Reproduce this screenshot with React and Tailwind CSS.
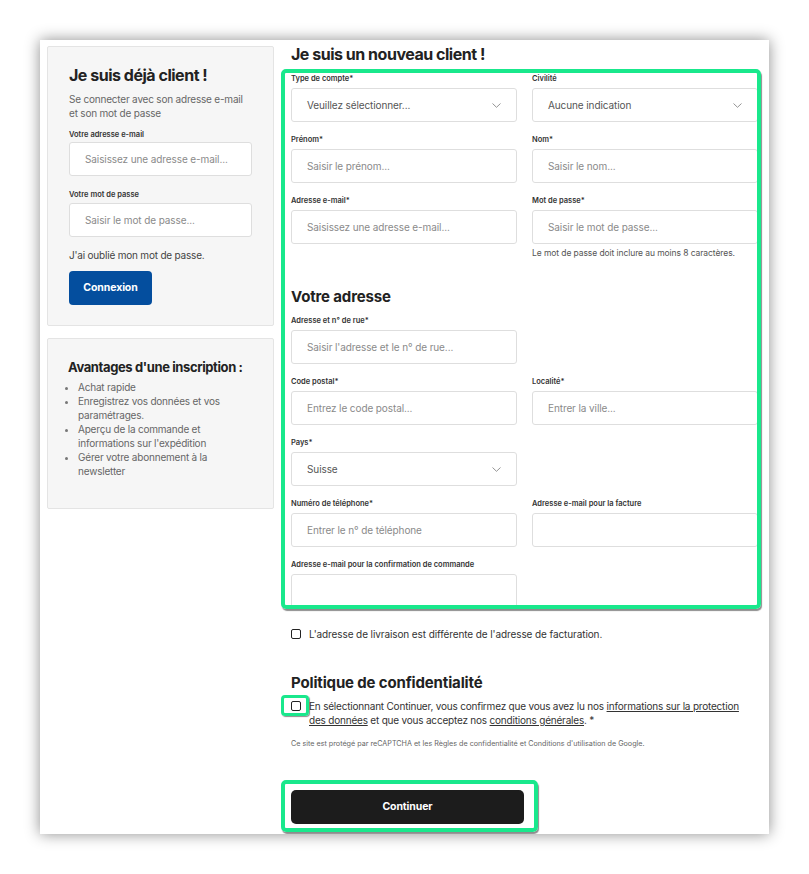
const font = { fontFamily: "Inter, 'Noto Sans', sans-serif" };

function Label({ children, className = "mb-[4px]" }) {
  return <div className={`text-[7.5px] leading-[10px] font-semibold text-[#333] whitespace-nowrap ${className}`}>{children}</div>;
}

function Input({ placeholder }) {
  return (
    <div className="h-[34px] bg-white border border-[#dedede] rounded-[3px] flex items-center pl-[15px] text-[10px] tracking-[-0.01em] text-[#8a8a8a] whitespace-nowrap overflow-hidden">
      {placeholder}
    </div>
  );
}

function Chevron() {
  return (
    <svg width="9" height="5" viewBox="0 0 9 5" fill="none">
      <path d="M0.5 0.5 L4.5 4.3 L8.5 0.5" stroke="#888" strokeWidth="0.9" />
    </svg>
  );
}

function Select({ value }) {
  return (
    <div className="h-[34px] bg-white border border-[#dedede] rounded-[3px] flex items-center justify-between pl-[15px] pr-[15px] text-[10px] tracking-[-0.01em] text-[#555]">
      <span>{value}</span>
      <Chevron />
    </div>
  );
}

function Field({ label, children }) {
  return (
    <div>
      <Label>{label}</Label>
      {children}
    </div>
  );
}

function Checkbox() {
  return <span className="block w-[10px] h-[10px] border border-[#222] rounded-[2px] bg-white shrink-0" />;
}

export default function App() {
  return (
    <div className="min-h-screen bg-white pt-[40px] pl-[40px]" style={font}>
      <div className="w-[729px] h-[794px] bg-white overflow-hidden shadow-[0_0_14px_rgba(0,0,0,0.45)] flex items-start">
        {/* colonne gauche */}
        <div className="w-[227px] ml-[7px] mt-[6px] flex flex-col gap-[12px]">
          <div className="bg-[#f6f6f6] border border-[#e4e4e4] rounded-[2px] pl-[21px] pr-[21px] pt-[17px] pb-[20px]">
            <h2 className="text-[16px] leading-[22px] font-bold tracking-[-0.03em] text-[#222]">Je suis déjà client !</h2>
            <p className="mt-[6px] text-[10px] leading-[14px] tracking-[-0.02em] text-[#666]">Se connecter avec son adresse e-mail<br />et son mot de passe</p>
            <div className="mt-[10px]">
              <Label className="mb-[2px]">Votre adresse e-mail</Label>
              <Input placeholder="Saisissez une adresse e-mail..." />
            </div>
            <div className="mt-[14px]">
              <Label className="mb-[3px]">Votre mot de passe</Label>
              <Input placeholder="Saisir le mot de passe..." />
            </div>
            <p className="mt-[11px] text-[10px] leading-[14px] tracking-[-0.02em] text-[#444]">J'ai oublié mon mot de passe.</p>
            <button className="mt-[9px] w-[83px] h-[34px] rounded-[4px] bg-[#044e9e] text-white text-[10.5px] font-bold tracking-[-0.01em]">Connexion</button>
          </div>

          <div className="bg-[#f6f6f6] border border-[#e4e4e4] rounded-[2px] pl-[20px] pr-[20px] pt-[19px] pb-[30px]">
            <h3 className="text-[13px] leading-[18px] font-bold tracking-[-0.03em] text-[#222] whitespace-nowrap">Avantages d'une inscription :</h3>
            <ul className="mt-[4px] list-disc pl-[10px] text-[10px] leading-[14px] tracking-[-0.02em] text-[#666] marker:text-[#777]">
              <li>Achat rapide</li>
              <li>Enregistrez vos données et vos<br />paramétrages.</li>
              <li>Aperçu de la commande et<br />informations sur l'expédition</li>
              <li>Gérer votre abonnement à la<br />newsletter</li>
            </ul>
          </div>
        </div>

        {/* colonne droite */}
        <div className="ml-[7px] w-[480px] flex flex-col">
          <h2 className="mt-[3px] mb-[4px] pl-[10px] text-[16px] leading-[22px] font-bold tracking-[-0.03em] text-[#222]">Je suis un nouveau client !</h2>

          <div className="h-[540px] border-4 border-[#19e88c] rounded-[5px] overflow-hidden pl-[2px] pt-[1px] shadow-[1px_2px_1px_rgba(0,0,0,0.45)]">
            <div className="w-[500px]">
              <div className="grid grid-cols-[226px_226px] gap-x-[15px] gap-y-[13px] pl-[4px]">
                <Field label="Type de compte*"><Select value="Veuillez sélectionner..." /></Field>
                <Field label="Civilité"><Select value="Aucune indication" /></Field>
                <Field label="Prénom*"><Input placeholder="Saisir le prénom..." /></Field>
                <Field label="Nom*"><Input placeholder="Saisir le nom..." /></Field>
                <Field label="Adresse e-mail*"><Input placeholder="Saisissez une adresse e-mail..." /></Field>
                <Field label="Mot de passe*">
                  <Input placeholder="Saisir le mot de passe..." />
                  <p className="mt-[3px] text-[8.5px] leading-[12px] tracking-[-0.01em] text-[#555] whitespace-nowrap">Le mot de passe doit inclure au moins 8 caractères.</p>
                </Field>
              </div>

              <h3 className="mt-[28px] mb-[9px] pl-[4px] text-[15px] leading-[20px] font-bold tracking-[-0.01em] text-[#222]">Votre adresse</h3>

              <div className="grid grid-cols-[226px_226px] gap-x-[15px] gap-y-[13px] pl-[4px]">
                <Field label="Adresse et n° de rue*"><Input placeholder="Saisir l'adresse et le n° de rue..." /></Field>
                <div />
                <Field label="Code postal*"><Input placeholder="Entrez le code postal..." /></Field>
                <Field label="Localité*"><Input placeholder="Entrer la ville..." /></Field>
                <Field label="Pays*"><Select value="Suisse" /></Field>
                <div />
                <Field label="Numéro de téléphone*"><Input placeholder="Entrer le n° de téléphone" /></Field>
                <Field label="Adresse e-mail pour la facture"><Input placeholder="" /></Field>
                <Field label="Adresse e-mail pour la confirmation de commande"><Input placeholder="" /></Field>
              </div>
            </div>
          </div>

          <div className="mt-[17px] pl-[10px] flex items-center gap-[8px] h-[16px]">
            <Checkbox />
            <span className="text-[10px] tracking-[-0.01em] text-[#333]">L'adresse de livraison est différente de l'adresse de facturation.</span>
          </div>

          <h3 className="mt-[31px] pl-[10px] text-[15px] leading-[20px] font-bold tracking-[-0.01em] text-[#222]">Politique de confidentialité</h3>

          <div className="mt-[6px] pl-[10px] flex items-start gap-[8px]">
            <span className="relative mt-[2px]">
              <Checkbox />
              <span className="absolute left-[-10px] top-[-6px] w-[28px] h-[21px] border-[3px] border-[#19e88c] rounded-[4px] shadow-[1px_1px_1px_rgba(0,0,0,0.45)]" />
            </span>
            <p className="text-[10px] leading-[14px] tracking-[-0.02em] text-[#333] whitespace-nowrap">
              En sélectionnant Continuer, vous confirmez que vous avez lu nos{" "}
              <span className="underline">informations sur la protection</span>
              <br />
              <span className="underline">des données</span> et que vous acceptez nos{" "}
              <span className="underline">conditions générales</span>. *
            </p>
          </div>

          <p className="mt-[12px] pl-[10px] text-[7.2px] leading-[10px] text-[#666] whitespace-nowrap">
            Ce site est protégé par reCAPTCHA et les Règles de confidentialité et Conditions d'utilisation de Google.
          </p>

          <div className="mt-[31px] w-[257px] border-4 border-[#19e88c] rounded-[5px] pl-[6px] pr-[10px] pt-[6px] pb-[4px] shadow-[1px_2px_1px_rgba(0,0,0,0.45)]">
            <button className="w-full h-[34px] rounded-[5px] bg-[#1c1c1c] text-white text-[10.5px] font-bold tracking-[-0.01em]">Continuer</button>
          </div>
        </div>
      </div>
    </div>
  );
}
